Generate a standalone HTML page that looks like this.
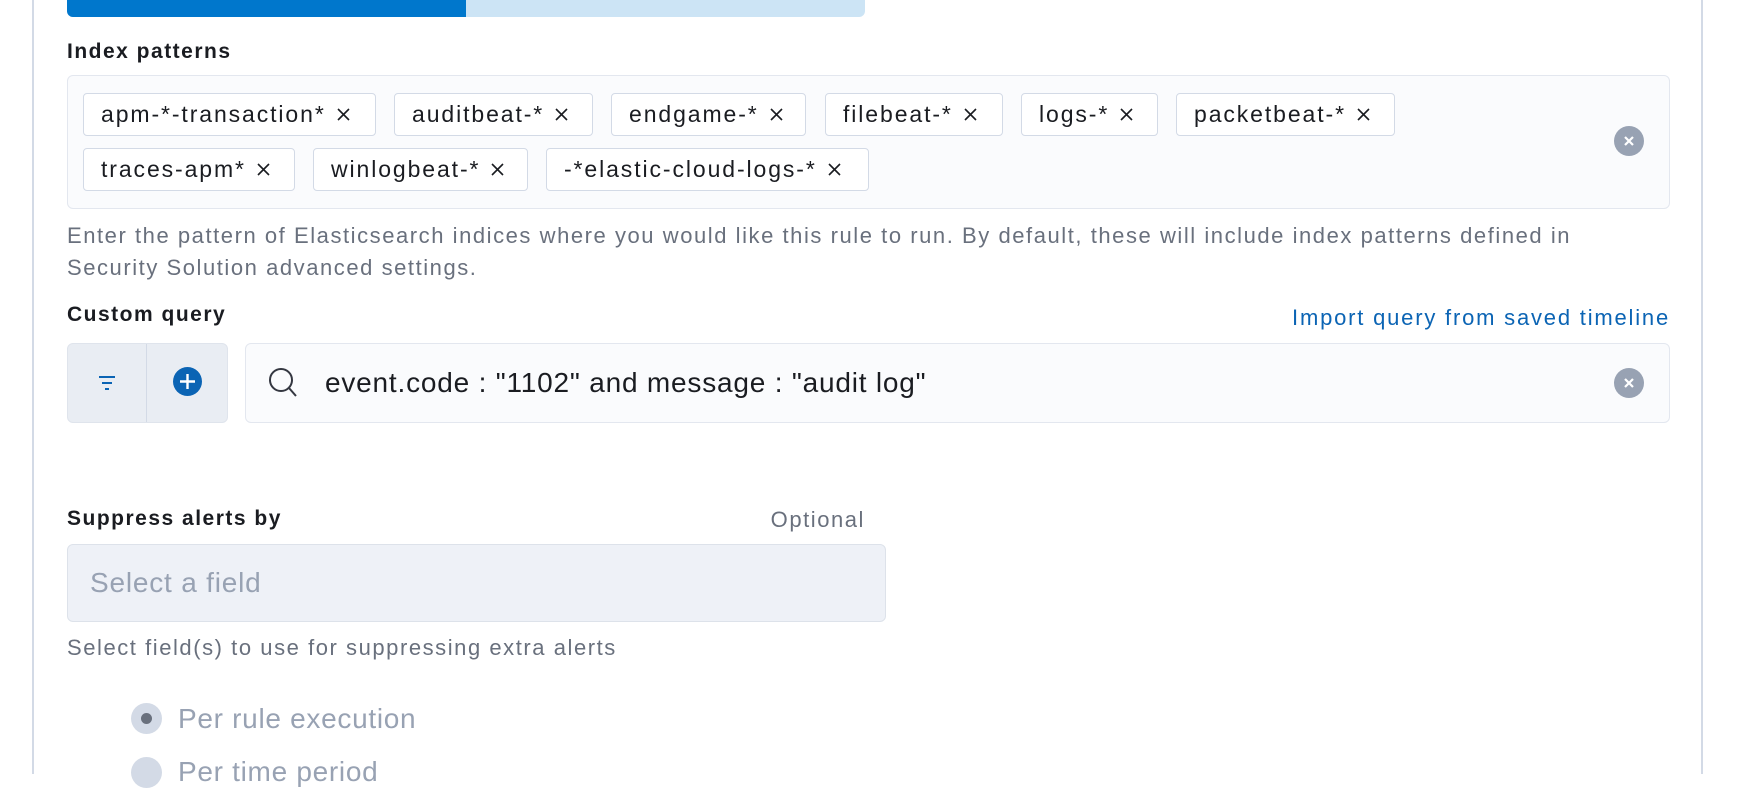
<!DOCTYPE html>
<html><head><meta charset="utf-8"><style>
*{box-sizing:border-box;margin:0;padding:0}
body{width:1744px;height:774px;background:#fff;position:relative;overflow:hidden;font-family:"Liberation Sans",sans-serif;color:#1a1c21}
.a{position:absolute;white-space:nowrap}
.lbl{font-weight:bold;font-size:21px;letter-spacing:1.5px}
.help{font-size:22px;color:#69707d;letter-spacing:1.55px}
.pill{position:absolute;height:43px;border:1px solid #d3dae6;border-radius:4px;background:#fff;font-size:23px;letter-spacing:1.9px;line-height:41px;padding-left:17px;display:flex;align-items:center}
.pill svg{margin-left:10px;flex:none}
.clr{position:absolute;width:30px;height:30px;border-radius:50%;background:#98a2b3}
.clr svg{position:absolute;left:8px;top:8px}
</style></head><body>
<div class="a" style="left:32px;top:0;width:2px;height:774px;background:#d3dae6"></div>
<div class="a" style="left:1701px;top:0;width:2px;height:774px;background:#d3dae6"></div>
<div class="a" style="left:67px;top:0;width:798px;height:17px;background:#cce4f5;border-radius:0 0 6px 6px"></div>
<div class="a" style="left:67px;top:0;width:399px;height:17px;background:#0077cc;border-radius:0 0 0 6px"></div>

<div class="a lbl" style="left:67px;top:40px">Index patterns</div>
<div class="a" style="left:67px;top:75px;width:1603px;height:134px;background:#fafbfd;border:1px solid #e3e7ef;border-radius:6px"></div>
<div class="pill" style="left:83px;top:93px;width:293px"><span>apm-*-transaction*</span><svg width="15" height="15" viewBox="0 0 15 15"><path d="M2 2L13 13M13 2L2 13" stroke="#1a1c21" stroke-width="1.6"/></svg></div>
<div class="pill" style="left:394px;top:93px;width:199px"><span>auditbeat-*</span><svg width="15" height="15" viewBox="0 0 15 15"><path d="M2 2L13 13M13 2L2 13" stroke="#1a1c21" stroke-width="1.6"/></svg></div>
<div class="pill" style="left:611px;top:93px;width:195px"><span>endgame-*</span><svg width="15" height="15" viewBox="0 0 15 15"><path d="M2 2L13 13M13 2L2 13" stroke="#1a1c21" stroke-width="1.6"/></svg></div>
<div class="pill" style="left:825px;top:93px;width:178px"><span>filebeat-*</span><svg width="15" height="15" viewBox="0 0 15 15"><path d="M2 2L13 13M13 2L2 13" stroke="#1a1c21" stroke-width="1.6"/></svg></div>
<div class="pill" style="left:1021px;top:93px;width:137px"><span>logs-*</span><svg width="15" height="15" viewBox="0 0 15 15"><path d="M2 2L13 13M13 2L2 13" stroke="#1a1c21" stroke-width="1.6"/></svg></div>
<div class="pill" style="left:1176px;top:93px;width:219px"><span>packetbeat-*</span><svg width="15" height="15" viewBox="0 0 15 15"><path d="M2 2L13 13M13 2L2 13" stroke="#1a1c21" stroke-width="1.6"/></svg></div>
<div class="pill" style="left:83px;top:148px;width:212px"><span>traces-apm*</span><svg width="15" height="15" viewBox="0 0 15 15"><path d="M2 2L13 13M13 2L2 13" stroke="#1a1c21" stroke-width="1.6"/></svg></div>
<div class="pill" style="left:313px;top:148px;width:215px"><span>winlogbeat-*</span><svg width="15" height="15" viewBox="0 0 15 15"><path d="M2 2L13 13M13 2L2 13" stroke="#1a1c21" stroke-width="1.6"/></svg></div>
<div class="pill" style="left:546px;top:148px;width:323px"><span>-*elastic-cloud-logs-*</span><svg width="15" height="15" viewBox="0 0 15 15"><path d="M2 2L13 13M13 2L2 13" stroke="#1a1c21" stroke-width="1.6"/></svg></div>
<div class="clr" style="left:1614px;top:126px"><svg width="14" height="14" viewBox="0 0 14 14"><path d="M3 3L11 11M11 3L3 11" stroke="#fff" stroke-width="2.2"/></svg></div>

<div class="a help" style="left:67px;top:223px">Enter the pattern of Elasticsearch indices where you would like this rule to run. By default, these will include index patterns defined in</div>
<div class="a help" style="left:67px;top:255px">Security Solution advanced settings.</div>

<div class="a lbl" style="left:67px;top:303px">Custom query</div>
<div class="a" style="right:74px;top:305px;font-size:22px;letter-spacing:1.8px;color:#0b64b4">Import query from saved timeline</div>

<div class="a" style="left:67px;top:343px;width:161px;height:80px;background:#e9edf3;border:1px solid #dfe4ec;border-radius:6px"></div>
<div class="a" style="left:146px;top:344px;width:1px;height:78px;background:#d3dae6"></div>
<svg class="a" style="left:97px;top:374px" width="20" height="18" viewBox="0 0 20 18"><path d="M2 3H18M5 9H15M8 15H12" stroke="#0b64b4" stroke-width="2"/></svg>
<div class="a" style="left:173px;top:367px;width:29px;height:29px;border-radius:50%;background:#0b64b4"></div>
<svg class="a" style="left:173px;top:367px" width="29" height="29" viewBox="0 0 29 29"><path d="M14.5 7V22M7 14.5H22" stroke="#fff" stroke-width="2.4"/></svg>

<div class="a" style="left:245px;top:343px;width:1425px;height:80px;background:#fafbfd;border:1px solid #e3e7ef;border-radius:6px"></div>
<svg class="a" style="left:267px;top:366px" width="34" height="34" viewBox="0 0 34 34"><circle cx="14" cy="14" r="11" fill="none" stroke="#343741" stroke-width="2"/><path d="M22 22L29 30" stroke="#343741" stroke-width="2"/></svg>
<div class="a" style="left:325px;top:367px;font-size:28px;letter-spacing:0.8px">event.code : "1102" and message : "audit log"</div>
<div class="clr" style="left:1614px;top:368px"><svg width="14" height="14" viewBox="0 0 14 14"><path d="M3 3L11 11M11 3L3 11" stroke="#fff" stroke-width="2.2"/></svg></div>

<div class="a lbl" style="left:67px;top:507px">Suppress alerts by</div>
<div class="a help" style="right:879px;top:507px">Optional</div>
<div class="a" style="left:67px;top:544px;width:819px;height:78px;background:#eef1f7;border:1px solid #dde2ea;border-radius:6px"></div>
<div class="a" style="left:90px;top:567px;font-size:28px;letter-spacing:0.8px;color:#98a2b3">Select a field</div>
<div class="a help" style="left:67px;top:635px">Select field(s) to use for suppressing extra alerts</div>

<div class="a" style="left:131px;top:703px;width:31px;height:31px;border-radius:50%;background:#d3dae6"></div>
<div class="a" style="left:141px;top:713px;width:11px;height:11px;border-radius:50%;background:#69707d"></div>
<div class="a" style="left:178px;top:703px;font-size:28px;letter-spacing:0.7px;color:#98a2b3">Per rule execution</div>
<div class="a" style="left:131px;top:757px;width:31px;height:31px;border-radius:50%;background:#d3dae6"></div>
<div class="a" style="left:178px;top:756px;font-size:28px;letter-spacing:0.7px;color:#98a2b3">Per time period</div>
</body></html>
